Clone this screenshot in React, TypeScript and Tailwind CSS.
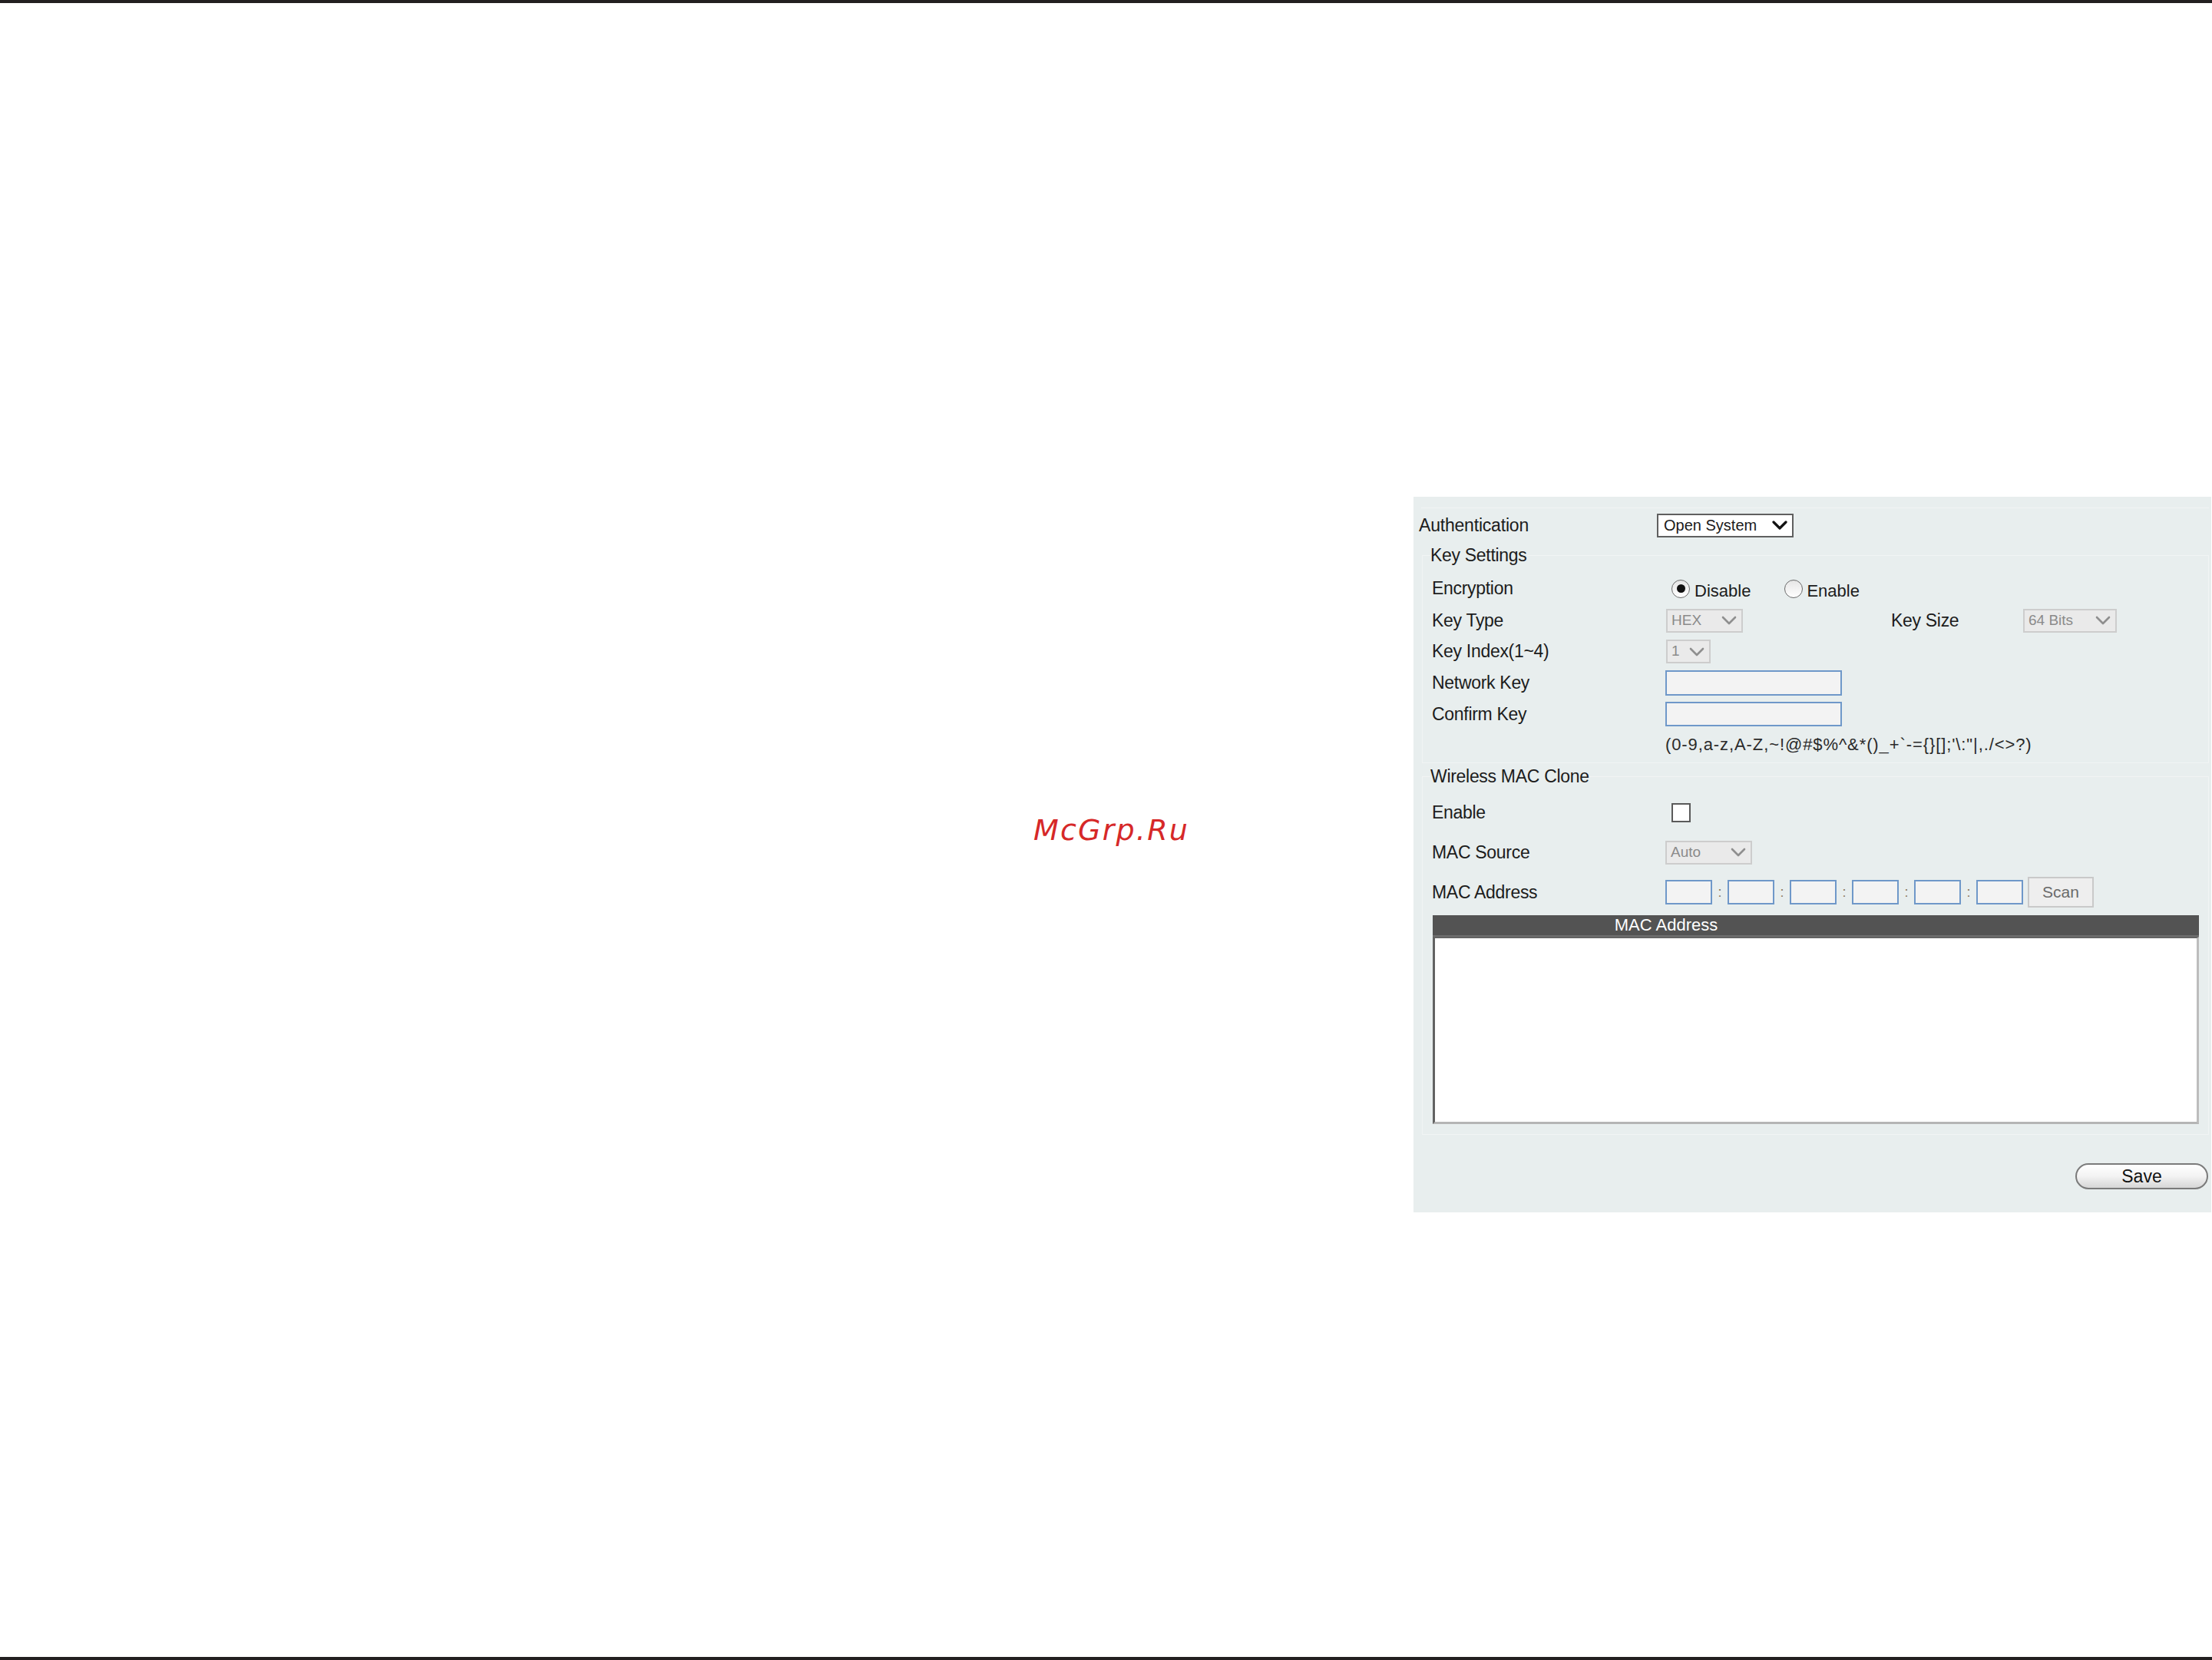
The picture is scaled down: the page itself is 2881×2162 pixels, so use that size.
import React from "react";

function Chevron({ color = "#111", width = 3 }: { color?: string; width?: number }) {
  return (
    <svg width={20} height={12} viewBox="0 0 20 12" className="shrink-0">
      <polyline
        points="2,2 10,10 18,2"
        fill="none"
        stroke={color}
        strokeWidth={width}
        strokeLinecap="round"
        strokeLinejoin="round"
      />
    </svg>
  );
}

function DisabledSelect({ text, w }: { text: string; w: string }) {
  return (
    <div
      className={`${w} h-[31px] shrink-0 border-2 border-[#cdcdcd] bg-[#eaeaea] flex items-center justify-between pl-[5px] pr-[6px] text-[19px] text-[#8a8a8a]`}
    >
      <span>{text}</span>
      <Chevron color="#8f8f8f" width={2.6} />
    </div>
  );
}

function Label({ children }: { children: React.ReactNode }) {
  return <div className="w-[304px] shrink-0 text-[23px] tracking-[-0.3px] text-[#1c1c1c]">{children}</div>;
}

function TextInput({ w, h }: { w: string; h: string }) {
  return <div className={`${w} ${h} shrink-0 border-2 border-[#6f98c9] bg-[#f3f3f3]`} />;
}

function Radio({ checked }: { checked?: boolean }) {
  return (
    <div className="w-[24px] h-[24px] shrink-0 rounded-full border-[1.5px] border-[#6a6a6a] bg-gradient-to-b from-[#e6e6e6] to-white flex items-center justify-center">
      {checked && <div className="w-[11px] h-[11px] rounded-full bg-[#111]" />}
    </div>
  );
}

export default function App() {
  const macInputs = [0, 1, 2, 3, 4, 5];
  return (
    <div className="relative w-[2881px] h-[2162px] bg-white flex flex-col overflow-hidden [font-family:'Liberation_Sans',Arial,sans-serif]">
      <div className="h-[4px] shrink-0 bg-[#231f20]" />
      <div className="flex-1 flex">
        <div className="w-[1841px] shrink-0" />
        <div className="mt-[643px] w-[1039px] h-[932px] shrink-0 bg-[#e8eeee] flex flex-col">
          <div className="h-[14px] shrink-0" />
          <div className="ml-[10px] mr-[3px] h-[1px] shrink-0 bg-[#f1f4f4]" />

          {/* Authentication */}
          <div className="h-[44px] shrink-0 flex items-center">
            <div className="w-[317px] pl-[7px] shrink-0 text-[23px] tracking-[-0.2px] text-[#1c1c1c]">Authentication</div>
            <div className="w-[178px] h-[31px] shrink-0 border-2 border-[#5f5f5f] bg-white flex items-center justify-between pl-[7px] pr-[6px] text-[20px] text-[#1a1a1a]">
              <span>Open System</span>
              <Chevron color="#111" width={3.2} />
            </div>
          </div>

          {/* Key Settings */}
          <fieldset className="mt-[3px] ml-[11px] mr-[3px] border border-[#f1f4f4] shrink-0">
            <legend className="ml-[10px] h-[28px] leading-[28px] text-[23px] tracking-[-0.3px] text-[#1c1c1c]">Key Settings</legend>
            <div className="pl-[12px] pt-[9px] pb-[5px] flex flex-col">
              <div className="h-[41px] flex items-center">
                <Label>Encryption</Label>
                <div className="ml-[8px] flex items-center">
                  <Radio checked />
                  <span className="ml-[6px] mt-[5px] text-[22px] text-[#1c1c1c]">Disable</span>
                  <div className="ml-[44px]">
                    <Radio />
                  </div>
                  <span className="ml-[5px] mt-[5px] text-[22px] text-[#1c1c1c]">Enable</span>
                </div>
              </div>
              <div className="h-[42px] flex items-center">
                <Label>Key Type</Label>
                <div className="w-[294px] shrink-0 pl-[1px]">
                  <DisabledSelect text="HEX" w="w-[100px]" />
                </div>
                <div className="w-[172px] shrink-0 text-[23px] tracking-[-0.3px] text-[#1c1c1c]">Key Size</div>
                <DisabledSelect text="64 Bits" w="w-[122px]" />
              </div>
              <div className="h-[39px] flex items-center">
                <Label>Key Index(1~4)</Label>
                <div className="pl-[1px]">
                  <DisabledSelect text="1" w="w-[58px]" />
                </div>
              </div>
              <div className="h-[42px] flex items-center">
                <Label>Network Key</Label>
                <TextInput w="w-[230px]" h="h-[33px]" />
              </div>
              <div className="h-[40px] flex items-center">
                <Label>Confirm Key</Label>
                <TextInput w="w-[230px]" h="h-[32px]" />
              </div>
              <div className="h-[38px] flex items-center">
                <div className="w-[304px] shrink-0" />
                <div className="text-[22px] tracking-[0.9px] text-[#2a2a2a] whitespace-nowrap">
                  {"(0-9,a-z,A-Z,~!@#$%^&*()_+`-={}[];'\\:\"|,./<>?)"}
                </div>
              </div>
            </div>
          </fieldset>

          {/* Wireless MAC Clone */}
          <fieldset className="mt-[3px] ml-[11px] mr-[3px] border border-[#f1f4f4] shrink-0">
            <legend className="ml-[10px] h-[28px] leading-[28px] text-[23px] tracking-[-0.3px] text-[#1c1c1c]">Wireless MAC Clone</legend>
            <div className="pl-[12px] pt-[8px] pb-[13px] flex flex-col">
              <div className="h-[50px] flex items-center">
                <Label>Enable</Label>
                <div className="ml-[8px] w-[25px] h-[25px] border-2 border-[#5a5a5a] bg-white" />
              </div>
              <div className="h-[54px] flex items-center">
                <Label>MAC Source</Label>
                <DisabledSelect text="Auto" w="w-[113px]" />
              </div>
              <div className="h-[50px] flex items-center">
                <Label>MAC Address</Label>
                <div className="flex items-center">
                  {macInputs.map((i) => (
                    <React.Fragment key={i}>
                      {i > 0 && (
                        <span className="w-[20px] text-center text-[18px] text-[#8a7a60]">:</span>
                      )}
                      <TextInput w="w-[61px]" h="h-[32px]" />
                    </React.Fragment>
                  ))}
                  <div className="ml-[6px] w-[86px] h-[40px] border-2 border-[#c9c9c9] bg-[#eeeeee] flex items-center justify-center text-[21px] text-[#6a6a6a]">
                    Scan
                  </div>
                </div>
              </div>

              <div className="mt-[5px] ml-[1px] mr-[12px] flex flex-col">
                <div className="h-[28px] bg-[#535353] border-b-2 border-[#6d6d6d] flex">
                  <div className="w-[608px] text-center text-[22px] leading-[26px] text-white">MAC Address</div>
                </div>
                <div className="h-[244px] bg-white border-l-[3px] border-t-[2px] border-[#626262] border-r-[3px] border-r-[#bdbdbd] border-b-[3px] border-b-[#b5b5b5]" />
              </div>
            </div>
          </fieldset>

          <div className="mt-[37px] self-end mr-[4px] w-[173px] h-[34px] rounded-full border-2 border-[#7a7a7a] bg-gradient-to-b from-white via-[#f3f3f3] to-[#d6d6d6] flex items-center justify-center text-[23px] text-[#111]">
            Save
          </div>
        </div>
      </div>
      <div className="h-[4px] shrink-0 bg-[#231f20]" />

      <div className="absolute left-[1346px] top-[1062px] text-[38px] leading-none italic tracking-[2.2px] text-[#d62828] [font-family:'DejaVu_Sans',sans-serif]">
        McGrp.Ru
      </div>
    </div>
  );
}
